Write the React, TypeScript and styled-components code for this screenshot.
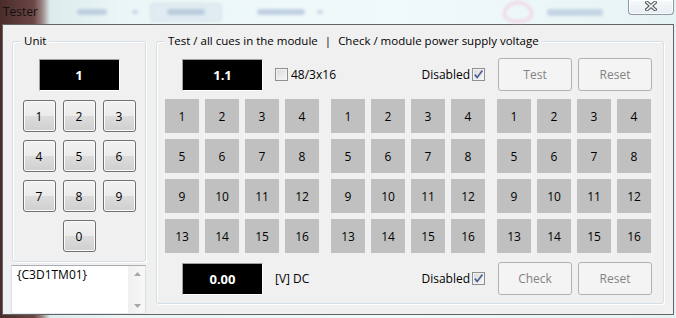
import React from 'react';
import styled, { createGlobalStyle } from 'styled-components';

const FONT = `"Open Sans", "Noto Sans", "DejaVu Sans", sans-serif`;

const Global = createGlobalStyle`
  html, body { margin: 0; padding: 0; background: #f0f0f0; }
  body { font-family: ${FONT}; font-size: 12px; color: #000; }
  * { box-sizing: border-box; }
`;

const Frame = styled.div`
  width: 676px;
  height: 318px;
  display: flex;
  flex-direction: column;
  overflow: hidden;
  background: linear-gradient(to right, #4a2c2b 0px, #6a4745 34px, #9a8584 42px, #dcebec 50px, #eaf6f6 120px, #f1fafa 400px, #e6f3f4 676px);
`;

const TitleBar = styled.div`
  height: 24px;
  flex: none;
  display: flex;
  align-items: flex-start;
`;

const Title = styled.span`
  width: 44px;
  padding: 4px 0 0 3px;
  font-size: 12px;
  line-height: 15px;
  color: #141010;
  flex: none;
`;

const GhostRow = styled.div`
  flex: 1;
  height: 24px;
  display: flex;
  align-items: center;
  filter: blur(1.6px);
  opacity: 0.65;
`;

const Ghost = styled.div<{ $ml: number; $w: number; $h: number; $c: string }>`
  flex: none;
  margin-left: ${p => p.$ml}px;
  width: ${p => p.$w}px;
  height: ${p => p.$h}px;
  background: ${p => p.$c};
  border-radius: 3px;
`;

const GhostButton = styled.div`
  flex: none;
  margin-left: 12px;
  width: 72px;
  height: 19px;
  border-radius: 3px;
  background: #d9e7ef;
  border: 1px solid #c5d6e2;
  display: flex;
  align-items: center;
  justify-content: center;
`;

const GhostHeart = styled.div`
  flex: none;
  margin-left: 180px;
  width: 30px;
  height: 22px;
  border: 3px solid #f3c6dc;
  border-radius: 50% 50% 50% 50% / 60% 60% 40% 40%;
`;

const CloseButton = styled.div`
  flex: none;
  width: 46px;
  height: 15px;
  margin-right: 2px;
  border: 1px solid #8f98a2;
  border-top: none;
  border-radius: 0 0 4px 4px;
  background: linear-gradient(#f6f9fb, #e6edf1);
  box-shadow: inset 0 0 0 1px rgba(255, 255, 255, 0.8);
  display: flex;
  justify-content: center;
  padding-top: 1px;
`;

const Client = styled.div`
  margin: 0 2px;
  height: 291px;
  flex: none;
  border: 1px solid #646464;
  background: #f0f0f0;
  display: flex;
  align-items: flex-start;
  gap: 10px;
  padding: 16px 9px 0 8px;
`;

const LeftColumn = styled.div`
  width: 135px;
  display: flex;
  flex-direction: column;
`;

const GroupBox = styled.div`
  position: relative;
  border: 1px solid #d5dfe5;
  border-radius: 3px;
  box-shadow: inset 1px 1px 0 #fff, 1px 1px 0 #fff;
`;

const Legend = styled.span`
  position: absolute;
  top: -9px;
  left: 8px;
  padding: 0 3px;
  background: #f0f0f0;
  line-height: 16px;
  font-size: 11.5px;
  white-space: nowrap;
`;

const Sep = styled.span`
  margin: 0 7px;
`;

const UnitGroup = styled(GroupBox)`
  width: 134px;
  height: 221px;
  margin-left: 1px;
  display: flex;
  flex-direction: column;
  align-items: center;
  padding-top: 17px;
`;

const Display = styled.div`
  width: 81px;
  height: 32px;
  flex: none;
  background: #000;
  color: #fff;
  font-weight: 700;
  font-size: 13px;
  display: flex;
  align-items: center;
  justify-content: center;
  border-top: 1px solid #a0a0a0;
  border-left: 1px solid #a0a0a0;
  border-right: 1px solid #fff;
  border-bottom: 1px solid #fff;
`;

const Keypad = styled.div`
  margin-top: 9px;
  display: grid;
  grid-template-columns: repeat(3, 33px);
  grid-auto-rows: 32px;
  gap: 8px 7px;
`;

const KeyButton = styled.div<{ $col?: number }>`
  grid-column: ${p => p.$col ?? 'auto'};
  border: 1px solid #707070;
  border-radius: 3px;
  background: linear-gradient(#f2f2f2 0%, #ebebeb 50%, #dddddd 50%, #cfcfcf 100%);
  box-shadow: inset 0 0 0 1px #fbfbfb;
  display: flex;
  align-items: center;
  justify-content: center;
  font-size: 12px;
`;

const TextBox = styled.div`
  margin-top: 3px;
  width: 135px;
  height: 49px;
  border: 1px solid #abadb3;
  border-left-color: #dbdfe6;
  border-right-color: #dbdfe6;
  border-bottom-color: #e3e9ef;
  background: #fff;
  display: flex;
`;

const TextContent = styled.div`
  flex: 1;
  padding: 1px 0 0 5px;
  font-size: 12px;
  line-height: 16px;
`;

const ScrollBar = styled.div`
  width: 17px;
  display: flex;
  flex-direction: column;
  justify-content: space-between;
  align-items: center;
  background: linear-gradient(to right, #f0f0f0, #f8f8f8);
  border-left: 1px solid #f0f0f0;
  padding: 6px 0 5px;
`;

const TestGroup = styled(GroupBox)`
  width: 508px;
  height: 263px;
  display: flex;
  flex-direction: column;
  padding: 16px 11px 8px 8px;
`;

const Row = styled.div<{ $mt?: number }>`
  height: 33px;
  flex: none;
  margin-top: ${p => p.$mt ?? 0}px;
  display: flex;
  align-items: center;
`;

const RowDisplay = styled(Display)`
  margin-left: 17px;
`;

const Check = styled.span<{ $ml: number }>`
  width: 13px;
  height: 13px;
  flex: none;
  margin-left: ${p => p.$ml}px;
  border: 1px solid #8e8f8f;
  background: linear-gradient(135deg, #dadada 0%, #f7f7f7 100%);
  box-shadow: inset 0 0 0 1px #f2f2f2;
  display: flex;
  align-items: center;
  justify-content: center;
`;

const Label = styled.span<{ $ml?: number }>`
  margin-left: ${p => p.$ml ?? 0}px;
  font-size: 12px;
  white-space: nowrap;
`;

const Spacer = styled.div`
  flex: 1;
`;

const DisabledButton = styled.div<{ $ml: number }>`
  width: 74px;
  height: 33px;
  flex: none;
  margin-left: ${p => p.$ml}px;
  border: 1px solid #adb2b5;
  border-radius: 3px;
  background: #f4f4f4;
  color: #838383;
  display: flex;
  align-items: center;
  justify-content: center;
  font-size: 12px;
`;

const CueGrid = styled.div`
  margin-top: 8px;
  display: flex;
  gap: 12px;
`;

const CueBlock = styled.div`
  display: grid;
  grid-template-columns: repeat(4, 34px);
  grid-auto-rows: 34px;
  gap: 6px;
`;

const Cue = styled.div`
  background: #c0c0c0;
  display: flex;
  align-items: center;
  justify-content: center;
  font-size: 12px;
`;

const CheckMark = () => (
  <svg width="11" height="11" viewBox="0 0 11 11">
    <path d="M1.8 5.6 L4.2 8.4 L9.4 1.6" fill="none" stroke="#4a5f94" strokeWidth="1.7" />
  </svg>
);

const CloseGlyph = () => (
  <svg width="12" height="10" viewBox="0 0 12 10">
    <path d="M2 1.5 L10 8.5 M10 1.5 L2 8.5" stroke="#4f5358" strokeWidth="3.6" strokeLinecap="square" />
    <path d="M2 1.5 L10 8.5 M10 1.5 L2 8.5" stroke="#f3f5f6" strokeWidth="1.6" strokeLinecap="square" />
  </svg>
);

const Arrow = ({ up }: { up?: boolean }) => (
  <svg width="7" height="4" viewBox="0 0 7 4">
    <path d={up ? 'M0 4 L3.5 0 L7 4 Z' : 'M0 0 L3.5 4 L7 0 Z'} fill="#a7a7a7" />
  </svg>
);

const cues = Array.from({ length: 16 }, (_, i) => i + 1);

export default function App() {
  return (
    <>
      <Global />
      <Frame>
        <TitleBar>
          <Title>Tester</Title>
          <GhostRow>
            <Ghost $ml={33} $w={30} $h={6} $c="#a9bcd8" />
            <Ghost $ml={25} $w={6} $h={4} $c="#b5c5dc" />
            <GhostButton>
              <Ghost $ml={0} $w={38} $h={6} $c="#a3b6cf" />
            </GhostButton>
            <Ghost $ml={35} $w={48} $h={6} $c="#a9bcd8" />
            <Ghost $ml={12} $w={6} $h={4} $c="#b5c5dc" />
            <GhostHeart />
            <Ghost $ml={14} $w={56} $h={7} $c="#b3c4dc" />
          </GhostRow>
          <CloseButton>
            <CloseGlyph />
          </CloseButton>
        </TitleBar>
        <Client>
          <LeftColumn>
            <UnitGroup>
              <Legend>Unit</Legend>
              <Display>1</Display>
              <Keypad>
                {[1, 2, 3, 4, 5, 6, 7, 8, 9].map(n => (
                  <KeyButton key={n}>{n}</KeyButton>
                ))}
                <KeyButton $col={2}>0</KeyButton>
              </Keypad>
            </UnitGroup>
            <TextBox>
              <TextContent>{'{C3D1TM01}'}</TextContent>
              <ScrollBar>
                <Arrow up />
                <Arrow />
              </ScrollBar>
            </TextBox>
          </LeftColumn>
          <TestGroup>
            <Legend>
              Test / all cues in the module<Sep>|</Sep>Check / module power supply voltage
            </Legend>
            <Row>
              <RowDisplay>1.1</RowDisplay>
              <Check $ml={12} />
              <Label $ml={3}>48/3x16</Label>
              <Spacer />
              <Label>Disabled</Label>
              <Check $ml={2}>
                <CheckMark />
              </Check>
              <DisabledButton $ml={13}>Test</DisabledButton>
              <DisabledButton $ml={6}>Reset</DisabledButton>
            </Row>
            <CueGrid>
              {[0, 1, 2].map(b => (
                <CueBlock key={b}>
                  {cues.map(n => (
                    <Cue key={n}>{n}</Cue>
                  ))}
                </CueBlock>
              ))}
            </CueGrid>
            <Row $mt={9}>
              <RowDisplay>0.00</RowDisplay>
              <Label $ml={12}>[V] DC</Label>
              <Spacer />
              <Label>Disabled</Label>
              <Check $ml={2}>
                <CheckMark />
              </Check>
              <DisabledButton $ml={13}>Check</DisabledButton>
              <DisabledButton $ml={6}>Reset</DisabledButton>
            </Row>
          </TestGroup>
        </Client>
      </Frame>
    </>
  );
}
